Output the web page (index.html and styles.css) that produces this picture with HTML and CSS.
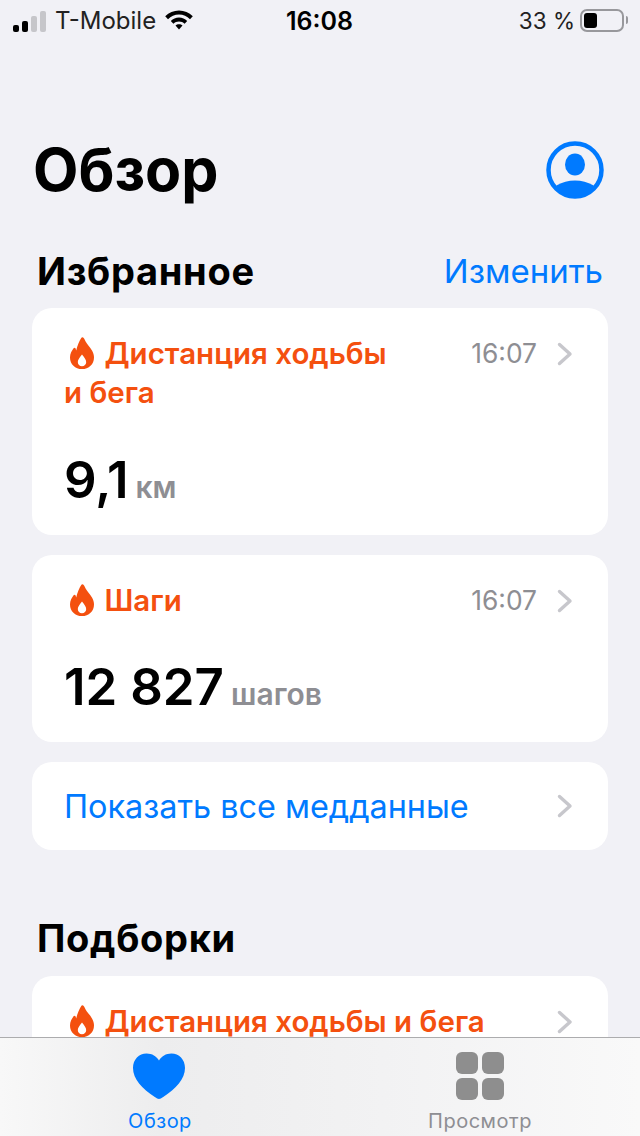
FILE: index.html
```html
<!DOCTYPE html>
<html lang="ru">
<head>
    <meta charset="UTF-8">
    <meta name="viewport" content="width=device-width, initial-scale=1.0">
    <title>Обзор</title>
    <link rel="stylesheet" href="styles.css">
</head>
<body>
    <svg class="defs" width="0" height="0">
        <symbol id="flame" viewBox="0 0 24 32">
            <path fill-rule="evenodd" d="M12.5 0.3C14 0.8 14.6 2.6 15.6 4.6C17 7.4 20 10 22 13.4C23.3 15.6 24 18 24 20.4C24 27.2 18.8 32 12 32C5.2 32 0 27.2 0 20.4C0 16.6 1.8 13.6 3.6 11.2C4.3 10.3 5.3 10.6 5.6 11.6L6.2 13.6C7.2 9 9.4 3.6 11.4 0.8C11.7 0.4 12.1 0.2 12.5 0.3ZM12 17.4C9.8 20 7.8 22.8 7.8 25C7.8 27.6 9.6 29.2 12 29.2C14.4 29.2 16.2 27.6 16.2 25C16.2 22.8 14.2 20 12 17.4Z"/>
        </symbol>
        <symbol id="chevron" viewBox="0 0 16 24">
            <path d="M2.5 2.5L13 12L2.5 21.5" fill="none" stroke="currentColor" stroke-width="3.4" stroke-linecap="round" stroke-linejoin="round"/>
        </symbol>
    </svg>

    <div class="screen">
        <div class="statusbar">
            <div class="status-left">
                <div class="signal">
                    <span class="bar b1"></span>
                    <span class="bar b2"></span>
                    <span class="bar b3 off"></span>
                    <span class="bar b4 off"></span>
                </div>
                <span>T-Mobile</span>
                <svg class="wifi" width="30" height="22" viewBox="0 0 30 22">
                    <path d="M15 1.5C20.4 1.5 25 3.6 28.8 7.2L26 10.2C23.1 7.4 19.3 5.6 15 5.6C10.7 5.6 6.9 7.4 4 10.2L1.2 7.2C5 3.6 9.6 1.5 15 1.5Z"/>
                    <path d="M15 8.6C18.2 8.6 21 9.9 23.2 12L20.6 14.8C19.1 13.4 17.2 12.6 15 12.6C12.8 12.6 10.9 13.4 9.4 14.8L6.8 12C9 9.9 11.8 8.6 15 8.6Z"/>
                    <path d="M15 15.2C16.4 15.2 17.6 15.7 18.5 16.6L15 20.6L11.5 16.6C12.4 15.7 13.6 15.2 15 15.2Z"/>
                </svg>
            </div>
            <div class="status-time">16:08</div>
            <div class="status-right">
                <span>33 %</span>
                <div class="battery"><div class="battery-fill"></div></div>
                <div class="battery-cap"></div>
            </div>
        </div>

        <div class="title-row">
            <h1>Обзор</h1>
            <svg class="avatar" width="58" height="58" viewBox="0 0 58 58">
                <defs>
                    <clipPath id="round"><circle cx="29" cy="29" r="26"/></clipPath>
                </defs>
                <circle cx="29" cy="29" r="26.5" fill="none" stroke="#007aff" stroke-width="4.5"/>
                <ellipse cx="29" cy="23.5" rx="10" ry="11" fill="#007aff"/>
                <ellipse cx="29" cy="55" rx="25" ry="15.5" fill="#007aff" clip-path="url(#round)"/>
            </svg>
        </div>

        <div class="section-head">
            <h2>Избранное</h2>
            <span class="edit">Изменить</span>
        </div>

        <div class="card card-dist">
            <div class="card-top">
                <div class="card-title">
                    <svg class="flame"><use href="#flame"/></svg> Дистанция ходьбы и&nbsp;бега
                </div>
                <span class="time">16:07</span>
                <svg class="chevron"><use href="#chevron"/></svg>
            </div>
            <div class="value">9,1<span class="unit">км</span></div>
        </div>

        <div class="card card-steps">
            <div class="card-top">
                <div class="card-title">
                    <svg class="flame"><use href="#flame"/></svg> Шаги
                </div>
                <span class="time">16:07</span>
                <svg class="chevron"><use href="#chevron"/></svg>
            </div>
            <div class="value">12 827<span class="unit">шагов</span></div>
        </div>

        <div class="card card-link">
            <span>Показать все медданные</span>
            <svg class="chevron"><use href="#chevron"/></svg>
        </div>

        <div class="section-head section-second">
            <h2>Подборки</h2>
        </div>

        <div class="card card-last">
            <div class="card-top">
                <div class="card-title wide">
                    <svg class="flame"><use href="#flame"/></svg> Дистанция ходьбы и бега
                </div>
                <svg class="chevron"><use href="#chevron"/></svg>
            </div>
        </div>

        <div class="tabbar">
            <div class="tab active">
                <svg class="heart" width="54" height="48" viewBox="0 0 54 48">
                    <path d="M27 47C25.8 47 24.6 46.3 22.8 45.1C10 36.6 1 27 1 16C1 7.4 7 1.5 14.6 1.5C20 1.5 24.6 4.3 27 8.6C29.4 4.3 34 1.5 39.4 1.5C47 1.5 53 7.4 53 16C53 27 44 36.6 31.2 45.1C29.4 46.3 28.2 47 27 47Z"/>
                </svg>
                <span>Обзор</span>
            </div>
            <div class="tab">
                <div class="grid-icon">
                    <i></i><i></i><i></i><i></i>
                </div>
                <span>Просмотр</span>
            </div>
        </div>
    </div>
</body>
</html>
```

FILE: styles.css
```css
* { box-sizing: border-box; }
body { margin: 0; background: #f1f1f6; font-family: Inter, "Liberation Sans", sans-serif; color: #000; }
h1, h2 { margin: 0; }
.defs { position: absolute; }

.screen { position: relative; width: 640px; height: 1136px; overflow: hidden; background: #f1f1f6; padding: 0 32px; }

.statusbar { display: flex; align-items: center; justify-content: space-between; height: 40px; margin: 0 -32px; padding: 0 12px 0 13px; font-size: 24px; position: relative; }
.status-left { display: flex; align-items: center; gap: 9px; color: #222; }
.signal { display: flex; align-items: flex-end; gap: 3px; height: 21px; margin-top: 2px; }
.bar { width: 6px; background: #000; border-radius: 2px; }
.bar.off { background: #c6c6ca; }
.b1 { height: 7px; }
.b2 { height: 11px; }
.b3 { height: 16px; }
.b4 { height: 21px; }
.wifi { margin-top: -1px; margin-left: -1px; }
.status-time { position: absolute; left: 286px; top: 6px; font-size: 25px; font-weight: 600; }
.status-right { display: flex; align-items: center; gap: 5px; color: #222; }
.status-right span { font-size: 22.5px; }
.battery { width: 44px; height: 23px; border: 2px solid #98989c; border-radius: 7px; padding: 2px; }
.battery-fill { width: 13px; height: 15px; background: #000; border-radius: 3px; }
.battery-cap { width: 2px; height: 8px; background: #98989c; border-radius: 0 2px 2px 0; margin-left: -3px; }

.title-row { display: flex; align-items: center; justify-content: space-between; margin-top: 98px; height: 64px; padding: 0 4px 0 1px; }
h1 { font-size: 59px; font-weight: 700; line-height: 64px; margin-top: -1px; }

.section-head { display: flex; align-items: center; justify-content: space-between; height: 40px; margin-top: 49px; padding: 0 5px; margin-bottom: 17px; }
h2 { font-size: 38px; font-weight: 700; line-height: 40px; letter-spacing: 0.7px; }
.edit { font-size: 33px; color: #007aff; }
.section-second { margin-top: 68px; margin-bottom: 18px; }

.card { background: #fff; border-radius: 20px; margin-bottom: 20px; padding: 26px 33px 26px 32px; }
.card-dist { height: 227px; }
.card-steps { height: 187px; }
.card-link { height: 88px; display: flex; align-items: center; justify-content: space-between; font-size: 32.4px; color: #007aff; }
.card-last { height: 200px; }

.card-top { display: flex; align-items: flex-start; }
.card-title { flex: 1; max-width: 351px; font-size: 29.5px; font-weight: 600; line-height: 39px; color: #f4500f; }
.card-title.wide { max-width: none; }
.flame { width: 24px; height: 32px; fill: #f4500f; vertical-align: -5px; margin-left: 6px; margin-right: 3px; }
.time { margin-left: auto; font-size: 26.4px; line-height: 39px; color: #8e8e93; }
.chevron { width: 16px; height: 24px; color: #c7c7cc; margin-top: 8px; margin-left: 20px; margin-right: 2px; flex: none; }
.card-link .chevron { margin-top: 0; }

.value { font-size: 51px; font-weight: 560; line-height: 60px; margin-top: 38px; }
.card-steps .value { margin-top: 37px; }
.unit { font-size: 30px; font-weight: 600; color: #8e8e93; margin-left: 7px; }

.tabbar { position: absolute; left: 0; right: 0; bottom: 0; height: 99px; display: flex; background: linear-gradient(90deg, #f8f8f8, #ededee 25%, #f2f2f3 60%, #f9f9f9); border-top: 1px solid #acacae; }
.tab { flex: 1; display: flex; flex-direction: column; align-items: center; font-size: 20px; color: #8e8e93; padding-top: 14px; gap: 9px; }
.tab.active { color: #007aff; fill: #007aff; }
.heart { margin-right: 2px; }
.tab span { line-height: 24px; letter-spacing: 0.5px; }
.grid-icon { display: grid; grid-template-columns: 22px 22px; grid-template-rows: 22px 22px; gap: 4px; height: 48px; }
.grid-icon i { background: #8e8e8e; border-radius: 6px; }
```
